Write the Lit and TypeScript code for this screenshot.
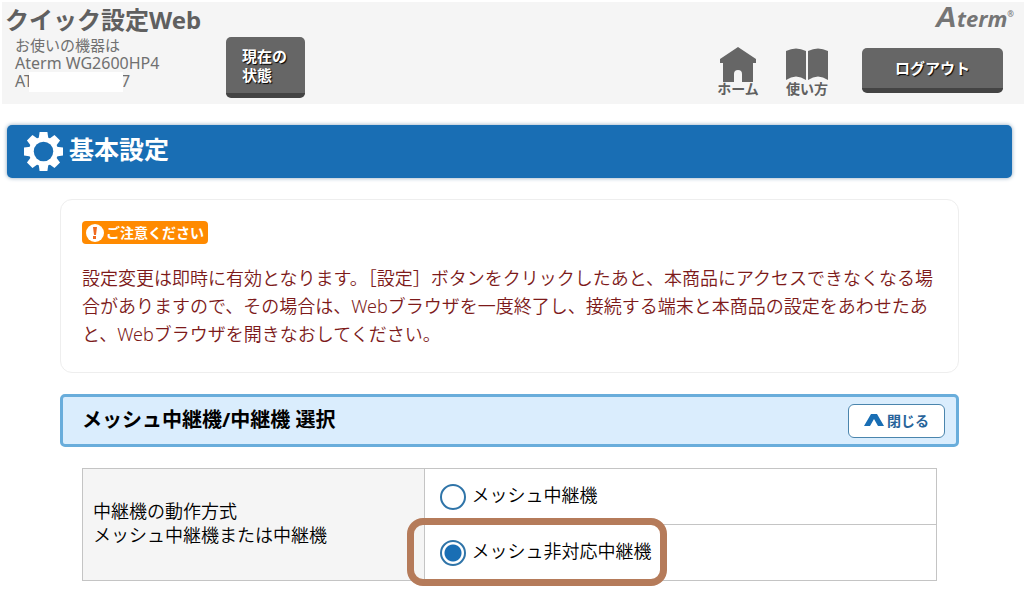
import { LitElement, html, css } from "lit";
import { customElement, state } from "lit/decorators.js";

const MODES = [
  { id: "mesh", label: "メッシュ中継機" },
  { id: "nonmesh", label: "メッシュ非対応中継機" },
];

@customElement("app-root")
export class AppRoot extends LitElement {
  @state() private mode = "nonmesh";

  static styles = css`
    :host {
      display: flow-root;
      background: #fff;
      color: #000;
      font-family: "Noto Sans", "Noto Sans CJK JP", sans-serif;
      font-size: 18px;
    }
    * { box-sizing: border-box; }
    h1, h2, h3, p { margin: 0; }
    button { font-family: inherit; cursor: pointer; }
    svg { display: block; }

    .header {
      display: flex;
      align-items: flex-start;
      height: 102px;
      margin: 2px 0 0 2px;
      background: #f5f5f5;
      color: #606060;
    }
    .product { width: 224px; padding: 2px 0 0 3px; }
    .product h1 { font-size: 24px; line-height: 32px; white-space: nowrap; }
    .device {
      padding-left: 10px;
      color: #707070;
      font-size: 16px;
      line-height: 18px;
    }
    .lead { font-size: 15px; }
    .serial { display: flex; }
    .mask { width: 94px; height: 20px; margin-left: -4px; background: #fff; z-index: 1; }
    .serial-end { margin-left: -2px; }

    .dark {
      border: 0;
      border-bottom: 5px solid #444;
      border-radius: 5px;
      background: #666;
      color: #fff;
      font-size: 15px;
      font-weight: 700;
      line-height: 19px;
      text-shadow: 1px 1px 1px #000;
    }
    .status { width: 79px; height: 61px; margin-top: 35px; padding: 2px 0 0 16px; text-align: left; }
    .side { margin-left: auto; padding-right: 10px; }
    .brand {
      display: flex;
      justify-content: flex-end;
      align-items: baseline;
      height: 36px;
      color: #757575;
      font: italic 700 22px/28px "Open Sans", "Noto Sans", sans-serif;
    }
    .brand .initial { font-family: "Liberation Sans", sans-serif; font-size: 30px; line-height: 30px; }
    .brand .mark { font-size: 8px; line-height: 24px; align-self: flex-start; }
    .nav { display: flex; align-items: flex-start; padding-right: 11px; }
    .nav a {
      display: flex;
      flex-direction: column;
      align-items: center;
      width: 44px;
      margin-right: 25px;
      margin-top: 9px;
      color: #606060;
      font-size: 14px;
      font-weight: 700;
      line-height: 14px;
      text-decoration: none;
      white-space: nowrap;
    }
    .nav a + a { margin-right: 33px; }
    .logout { width: 141px; height: 45px; margin-top: 10px; }

    .banner {
      display: flex;
      align-items: center;
      gap: 6px;
      height: 53px;
      margin: 21px 12px 0 7px;
      padding-left: 17px;
      border-radius: 5px;
      background: #196eb4;
      box-shadow: 0 0 4px #8aa4bb;
      color: #fff;
    }
    .banner h2 { padding-bottom: 5px; font-size: 25px; line-height: 32px; }

    .content { margin: 21px 65px 0 60px; padding-bottom: 20px; }
    .notice {
      padding: 21px 12px 24px 21px;
      border: 1px solid #eee;
      border-radius: 12px;
      color: #7d1a1a;
    }
    .badge {
      display: inline-flex;
      align-items: center;
      gap: 2px;
      height: 23px;
      padding: 0 4px;
      border-radius: 4px;
      background: #ff8a00;
      color: #fff;
      font-size: 14px;
      font-weight: 700;
      line-height: 22px;
      vertical-align: top;
    }
    .notice p { margin-top: 19px; line-height: 28px; font-weight: 350; }
    .section {
      display: flex;
      align-items: center;
      justify-content: space-between;
      height: 53px;
      margin-top: 21px;
      padding: 0 11px 0 19px;
      border: 3px solid #69addb;
      border-radius: 5px;
      background: #daedfd;
    }
    .section h3 { padding-bottom: 2px; font-size: 20px; line-height: 24px; }
    .close {
      display: flex;
      align-items: center;
      justify-content: center;
      gap: 3px;
      width: 97px;
      height: 34px;
      padding: 0 0 2px;
      border: 1px solid #4a85ad;
      border-radius: 6px;
      background: #fff;
      color: #27649a;
      font-size: 14px;
      font-weight: 700;
    }
    .settings { padding: 21px 22px 0; }
    table { width: 100%; border-collapse: collapse; }
    th, td { border: 1px solid #c4c4c4; height: 56px; padding: 0; text-align: left; }
    th {
      width: 40%;
      padding: 0 10px 4px;
      background: #f5f5f5;
      font-weight: 350;
      line-height: 24px;
    }
    .option { position: relative; padding-left: 15px; }
    label { display: flex; align-items: center; gap: 6px; font-weight: 350; line-height: 24px; }
    label span { padding-bottom: 3px; }
    input {
      appearance: none;
      width: 26px;
      height: 26px;
      margin: 0;
      border: 2px solid #2f74a8;
      border-radius: 50%;
      background: #fff;
    }
    input:checked { background: radial-gradient(circle, #196eb4 8px, #fff 9px); }
    .callout {
      position: absolute;
      left: -18px;
      top: -21px;
      width: 260px;
      height: 68px;
      border: 7px solid #b57b5a;
      border-radius: 16px;
      pointer-events: none;
    }
  `;

  render() {
    return html`
      <header class="header" lang="ja">
        <div class="product">
          <h1>クイック設定Web</h1>
          <div class="device">
            <div class="lead">お使いの機器は</div>
            <div>Aterm WG2600HP4</div>
            <div class="serial">
              <span>AT</span><span class="mask"></span><span class="serial-end">7</span>
            </div>
          </div>
        </div>
        <button class="dark status">現在の<br />状態</button>
        <div class="side">
          <div class="brand">
            <span class="initial">A</span><span>term</span><span class="mark">®</span>
          </div>
          <nav class="nav">
            <a href="#home">
              <svg width="36" height="35" viewBox="0 0 36 35" fill="#666">
                <path d="M18 0 36 12v4h-3v19H22v-8a4 4 0 0 0-8 0v8H3V16H0v-4Z" />
              </svg>
              ホーム
            </a>
            <a href="#help">
              <svg width="44" height="35" viewBox="0 0 44 35" fill="#666">
                <path d="M1 4Q11-1 21 4V33Q11 26 1 33ZM23 4Q33-1 43 4V33Q33 26 23 33Z" />
              </svg>
              使い方
            </a>
            <button class="dark logout">ログアウト</button>
          </nav>
        </div>
      </header>

      <main lang="ja">
        <div class="banner">
          <svg width="39" height="39" viewBox="-20 -20 40 40" fill="#fff">
            <circle r="15" />
            <path d="M-4-20H4L5-13V13L4 20H-4L-5 13V-13Z" />
            <path transform="rotate(45)" d="M-4-20H4L5-13V13L4 20H-4L-5 13V-13Z" />
            <path transform="rotate(90)" d="M-4-20H4L5-13V13L4 20H-4L-5 13V-13Z" />
            <path transform="rotate(135)" d="M-4-20H4L5-13V13L4 20H-4L-5 13V-13Z" />
            <circle r="10" fill="#196eb4" />
          </svg>
          <h2>基本設定</h2>
        </div>

        <div class="content">
          <section class="notice">
            <div class="badge">
              <svg width="18" height="18" viewBox="0 0 18 18">
                <circle cx="9" cy="9" r="9" fill="#fff" />
                <path d="M7 3h4l-1 8H8ZM7 12h3v3H7Z" fill="#f06a20" />
              </svg>
              ご注意ください
            </div>
            <p>設定変更は即時に有効となります。［設定］ボタンをクリックしたあと、本商品にアクセスできなくなる場合がありますので、その場合は、Webブラウザを一度終了し、接続する端末と本商品の設定をあわせたあと、Webブラウザを開きなおしてください。</p>
          </section>

          <div class="section">
            <h3>メッシュ中継機/中継機 選択</h3>
            <button class="close">
              <svg width="20" height="12" viewBox="0 0 20 12" fill="#196eb4">
                <path d="M7 0h6l7 12h-6l-4-7-4 7H0Z" />
              </svg>
              閉じる
            </button>
          </div>

          <div class="settings">
            <table>
              ${MODES.map(
                (m, i) => html`<tr>
                  ${i === 0
                    ? html`<th rowspan="2" scope="rowgroup">中継機の動作方式<br />メッシュ中継機または中継機</th>`
                    : null}
                  <td>
                    <div class="option">
                      <label for=${m.id}>
                        <input
                          type="radio"
                          name="mode"
                          id=${m.id}
                          .checked=${this.mode === m.id}
                          @change=${() => (this.mode = m.id)}
                        />
                        <span>${m.label}</span>
                      </label>
                      ${m.id === "nonmesh" ? html`<div class="callout"></div>` : null}
                    </div>
                  </td>
                </tr>`
              )}
            </table>
          </div>
        </div>
      </main>
    `;
  }
}
